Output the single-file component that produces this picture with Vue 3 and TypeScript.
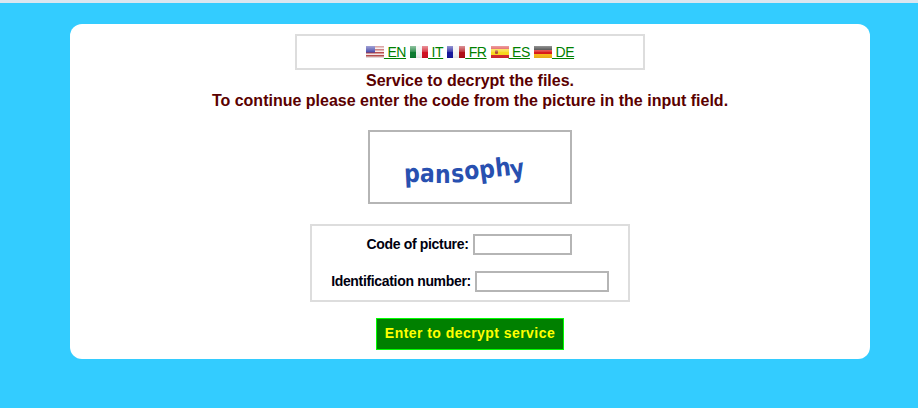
<script setup lang="ts">
const langs = [
  { code: 'EN', id: 'us' },
  { code: 'IT', id: 'it' },
  { code: 'FR', id: 'fr' },
  { code: 'ES', id: 'es' },
  { code: 'DE', id: 'de' },
]
const letters = [
  { c: 'p', r: -3, y: 3 },
  { c: 'a', r: 2, y: 3 },
  { c: 'n', r: 0, y: 4 },
  { c: 's', r: -3, y: 3 },
  { c: 'o', r: -6, y: 0 },
  { c: 'p', r: -8, y: -1 },
  { c: 'h', r: -6, y: -3 },
  { c: 'y', r: -10, y: -2 },
]
</script>

<template>
  <div class="page">
    <main class="card">
      <nav class="langs">
        <span v-for="l in langs" :key="l.code" class="lang">
          <svg class="flag" width="18" height="12" viewBox="0 0 18 12">
            <defs>
              <linearGradient :id="`gloss-${l.id}`" x1="0" y1="0" x2="0" y2="1">
                <stop offset="0" stop-color="#fff" stop-opacity=".55" />
                <stop offset=".45" stop-color="#fff" stop-opacity=".2" />
                <stop offset=".55" stop-color="#fff" stop-opacity="0" />
                <stop offset="1" stop-color="#000" stop-opacity=".08" />
              </linearGradient>
            </defs>
            <template v-if="l.id === 'us'">
              <rect width="18" height="12" fill="#f4e6e6" />
              <rect y="0" width="18" height="1.5" fill="#b84a4a" />
              <rect y="3" width="18" height="1.5" fill="#b84a4a" />
              <rect y="6" width="18" height="1.5" fill="#b84a4a" />
              <rect y="9" width="18" height="1.5" fill="#b84a4a" />
              <rect width="9" height="6.5" fill="#2f31a0" />
            </template>
            <template v-else-if="l.id === 'it'">
              <rect width="6" height="12" fill="#0a7a2e" />
              <rect x="6" width="6" height="12" fill="#f0f0f0" />
              <rect x="12" width="6" height="12" fill="#d01020" />
            </template>
            <template v-else-if="l.id === 'fr'">
              <rect width="6" height="12" fill="#14149c" />
              <rect x="6" width="6" height="12" fill="#f0f0f0" />
              <rect x="12" width="6" height="12" fill="#b00c14" />
            </template>
            <template v-else-if="l.id === 'es'">
              <rect width="18" height="12" fill="#d8262a" />
              <rect y="3" width="18" height="6" fill="#f8d81c" />
              <rect x="4" y="4.2" width="3" height="3.8" rx="1" fill="#b04a30" />
            </template>
            <template v-else>
              <rect width="18" height="4" fill="#141414" />
              <rect y="4" width="18" height="4" fill="#d81818" />
              <rect y="8" width="18" height="4" fill="#f8b818" />
            </template>
            <rect width="18" height="12" :fill="`url(#gloss-${l.id})`" />
          </svg><a class="link" href="#">&nbsp;{{ l.code }}</a>
        </span>
      </nav>

      <h1 class="title">
        Service to decrypt the files.<br />
        To continue please enter the code from the picture in the input field.
      </h1>

      <div class="captcha">
        <span class="word">
          <span
            v-for="(l, i) in letters"
            :key="i"
            class="letter"
            :style="{ transform: `translateY(${l.y}px) rotate(${l.r}deg) scaleY(1.15)` }"
          >{{ l.c }}</span>
        </span>
      </div>

      <form class="fields" @submit.prevent>
        <label class="row row-short">Code of picture: <input class="input short" type="text" /></label>
        <label class="row">Identification number: <input class="input long" type="text" /></label>
      </form>

      <button class="submit" type="button">Enter to decrypt service</button>
    </main>
  </div>
</template>

<style>
html, body { margin: 0; background: #33ccff; }
</style>

<style scoped>
.page {
  height: 408px;
  box-sizing: border-box;
  background: #33ccff;
  border-top: 3px solid #dbe6f0;
  padding-top: 21px;
  font-family: "Liberation Sans", Arial, sans-serif;
  overflow: hidden;
}
.card {
  width: 800px;
  height: 335px;
  margin-left: 70px;
  box-sizing: border-box;
  background: #fff;
  border-radius: 12px;
  padding-top: 10px;
  display: flex;
  flex-direction: column;
  align-items: center;
}
.langs {
  width: 350px;
  height: 36px;
  box-sizing: border-box;
  border: 2px solid #dddddd;
  display: flex;
  justify-content: center;
  align-items: center;
  gap: 4px;
  font-size: 14px;
  letter-spacing: -0.4px;
}
.lang { display: inline-flex; align-items: center; }
.flag { display: block; margin-top: -1px; }
.link { color: #008000; text-decoration: underline; line-height: 16px; }
.title {
  margin: 0;
  padding-top: 1px;
  font-size: 16px;
  line-height: 20px;
  font-weight: bold;
  color: #5a0000;
  text-align: center;
}
.captcha {
  width: 204px;
  height: 74px;
  box-sizing: border-box;
  margin-top: 19px;
  border: 2px solid #b5b5b5;
  display: flex;
  align-items: center;
  justify-content: center;
}
.word {
  display: inline-flex;
  font-family: "DejaVu Sans", sans-serif;
  font-weight: 700;
  font-size: 22px;
  line-height: 28px;
  color: #2850b0;
  margin-left: -11px;
  margin-top: 8px;
}
.letter { display: inline-block; }
.fields {
  width: 320px;
  height: 78px;
  box-sizing: border-box;
  margin-top: 20px;
  border: 2px solid #dddddd;
  padding: 8px 0;
  display: flex;
  flex-direction: column;
  gap: 16px;
  align-items: center;
}
.row {
  height: 21px;
  display: flex;
  align-items: flex-start;
  gap: 4px;
  font-size: 14px;
  line-height: 20px;
  letter-spacing: -0.33px;
  font-weight: bold;
  color: #00000f;
}
.row-short { margin-left: -2px; }
.input {
  height: 21px;
  box-sizing: border-box;
  margin: 0;
  padding: 0;
  background: #fff;
  border: 2px solid #b5b5b5;
}
.short { width: 99px; }
.long { width: 134px; }
.submit {
  width: 188px;
  height: 32px;
  margin-top: 16px;
  padding: 0 0 2px;
  background: #008000;
  border: 1px solid #00ff00;
  color: #ffff00;
  font-family: "Liberation Sans", Arial, sans-serif;
  font-size: 14px;
  font-weight: bold;
  letter-spacing: 0.45px;
}
</style>
